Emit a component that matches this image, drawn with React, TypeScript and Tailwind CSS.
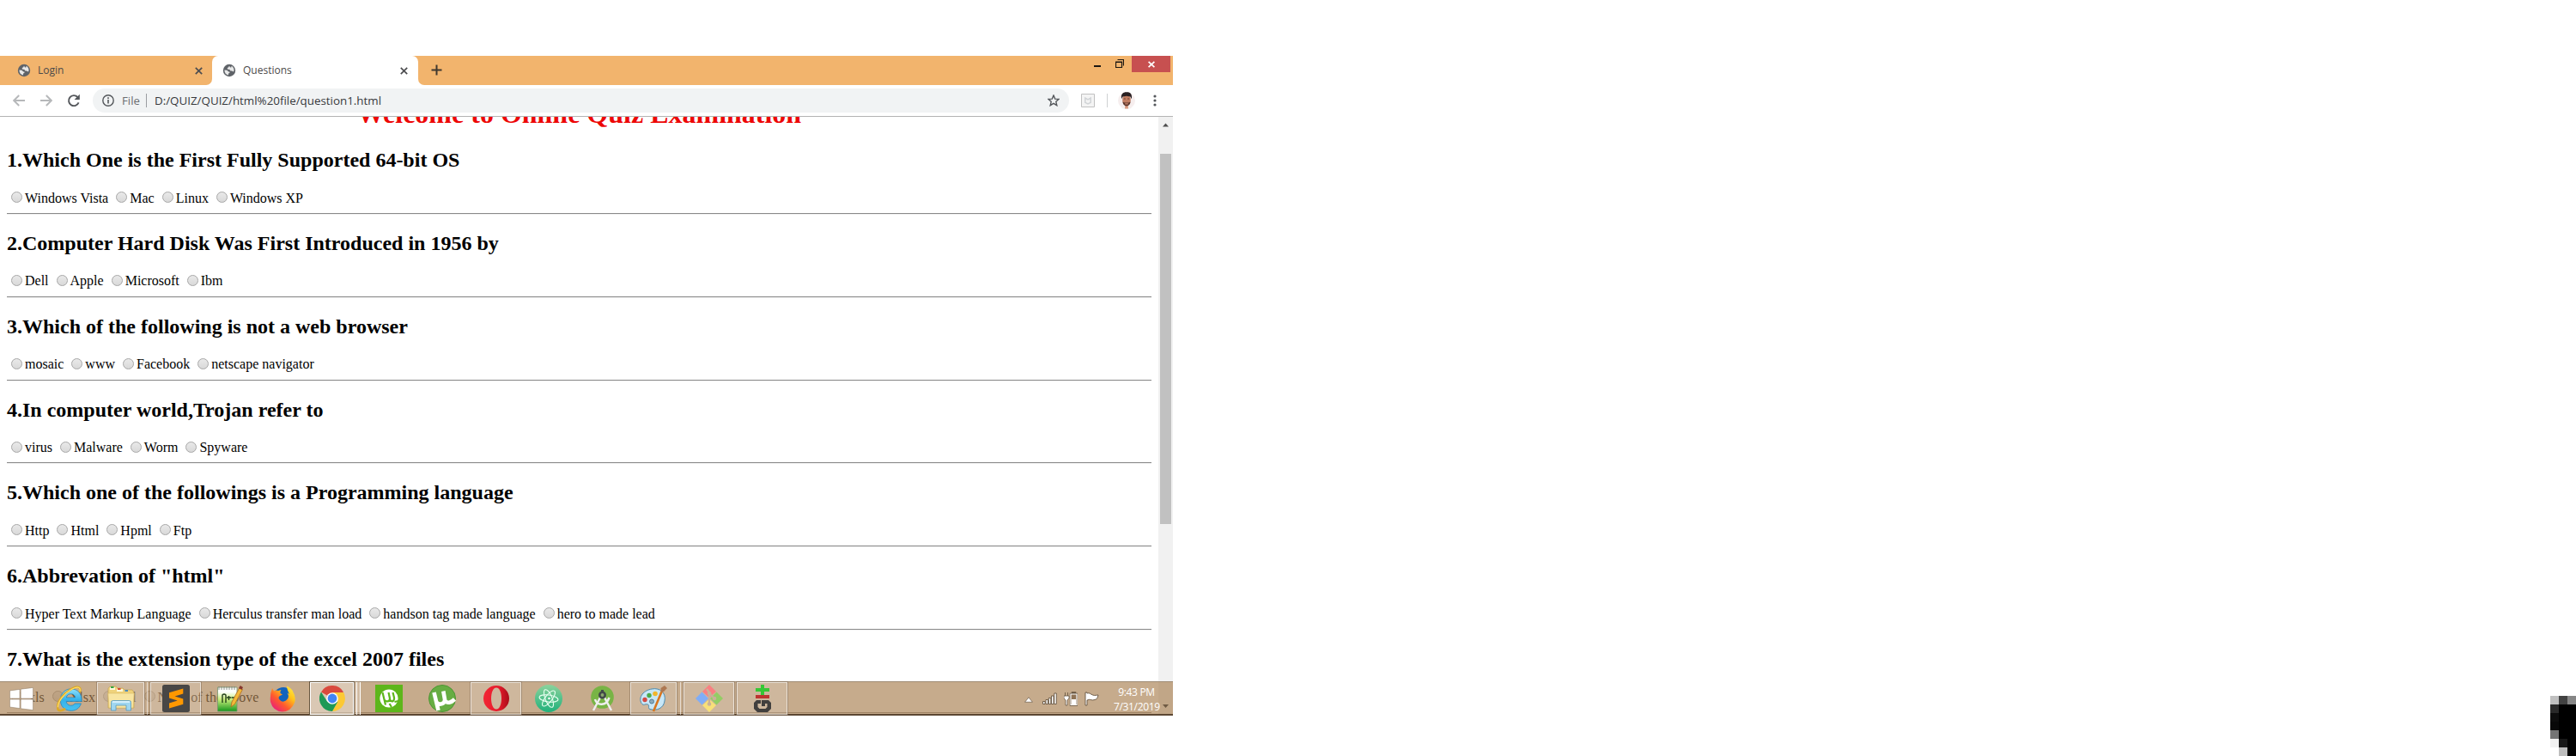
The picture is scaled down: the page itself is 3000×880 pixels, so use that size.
import React from "react";

const questions: { title: string; options: string[] }[] = [
  { title: "1.Which One is the First Fully Supported 64-bit OS", options: ["Windows Vista", "Mac", "Linux", "Windows XP"] },
  { title: "2.Computer Hard Disk Was First Introduced in 1956 by", options: ["Dell", "Apple", "Microsoft", "Ibm"] },
  { title: "3.Which of the following is not a web browser", options: ["mosaic", "www", "Facebook", "netscape navigator"] },
  { title: "4.In computer world,Trojan refer to", options: ["virus", "Malware", "Worm", "Spyware"] },
  { title: "5.Which one of the followings is a Programming language", options: ["Http", "Html", "Hpml", "Ftp"] },
  { title: '6.Abbrevation of "html"', options: ["Hyper Text Markup Language", "Herculus transfer man load", "handson tag made language", "hero to made lead"] },
  { title: "7.What is the extension type of the excel 2007 files", options: [".xls", ".Xlsx", ".xsl", "None of the above"] },
];

function Globe() {
  return (
    <svg className="size-[16px] shrink-0" viewBox="0 0 16 16">
      <circle cx="8" cy="8" r="7.2" fill="#5f6368" />
      <path d="M2.4 7.6 5.4 7.8 7.2 9.6H8.4V11L7 11.6V13.6C4.4 13.2 2.4 11 2.4 7.6ZM8 2.4 7.2 4.2 5.8 5V6.4L8.4 7 9.4 8.6 11.2 8.4 12.6 9.4 13.5 8.6C13.8 5.8 12.4 3.6 10.4 2.8L10.6 4.2 9 4.4Z" fill="#fff" opacity=".85" />
    </svg>
  );
}

function Close() {
  return (
    <svg className="size-[9px] shrink-0" viewBox="0 0 9 9">
      <path d="M.8.8 8.2 8.2M8.2.8.8 8.2" stroke="#4c4d50" strokeWidth="1.7" />
    </svg>
  );
}

function TabStrip() {
  return (
    <div className="flex h-[34px] bg-[#f2b46d] text-[12px] text-[#4b4a4a]">
      <div className="flex h-full w-[247px] items-center pl-[20px] pr-[11px]">
        <Globe />
        <span className="ml-[8px] flex-1">Login</span>
        <Close />
      </div>
      <div className="relative flex h-full w-[240px] items-center rounded-t-[7px] bg-white pl-[12px] pr-[12px]">
        <svg className="absolute bottom-0 -left-[7px] size-[7px]" viewBox="0 0 7 7"><path d="M7 0V7H0A7 7 0 0 0 7 0Z" fill="#fff" /></svg>
        <svg className="absolute bottom-0 -right-[7px] size-[7px]" viewBox="0 0 7 7"><path d="M0 0V7H7A7 7 0 0 1 0 0Z" fill="#fff" /></svg>
        <Globe />
        <span className="ml-[8px] flex-1">Questions</span>
        <Close />
      </div>
      <svg className="mt-[10px] ml-[15px] size-[13px]" viewBox="0 0 13 13"><path d="M6.5 .5V12.5M.5 6.5H12.5" stroke="#40382f" strokeWidth="2" /></svg>
      <div className="ml-auto flex items-start">
        <svg className="mt-[11px] h-[2px] w-[8px]" viewBox="0 0 8 2"><path d="M0 0H8V2H0Z" fill="#1c1712" /></svg>
        <svg className="mt-[4px] ml-[17px] size-[10px]" viewBox="0 0 10 10"><path d="M2.5 .5H9.5V7.5M.5 3H7.5V9.5H.5ZM.5 3.5H7.5" fill="none" stroke="#1c1712" strokeWidth="1.2" /></svg>
        <div className="ml-[9px] mr-[3px] flex h-[19px] w-[45px] items-center justify-center bg-[#c75050]">
          <svg className="size-[8px]" viewBox="0 0 8 8"><path d="M.6.8 7.4 7.2M7.4.8.6 7.2" stroke="#fff" strokeWidth="1.7" /></svg>
        </div>
      </div>
    </div>
  );
}

function Toolbar() {
  return (
    <div className="flex h-[37px] items-center border-b border-[#b4b4b4] bg-white">
      <svg className="ml-[15px] size-[14px]" viewBox="0 0 14 14"><path d="M14 7H1.5M7.2 1 1.2 7 7.2 13" fill="none" stroke="#b6b8ba" strokeWidth="1.9" /></svg>
      <svg className="ml-[18px] size-[14px]" viewBox="0 0 14 14"><path d="M0 7H12.5M6.8 1 12.8 7 6.8 13" fill="none" stroke="#b6b8ba" strokeWidth="1.9" /></svg>
      <svg className="ml-[17px] size-[16px]" viewBox="0 0 16 16"><path d="M13.6 10.4A6 6 0 1 1 12.4 4" fill="none" stroke="#54575b" strokeWidth="1.9" /><path d="M14.8 .8V7H8.6Z" fill="#54575b" /></svg>
      <div className="ml-[14px] flex h-[28px] w-[1137px] items-center rounded-full bg-[#f1f3f4] pl-[11px] text-[14px]">
        <svg className="size-[14px]" viewBox="0 0 14 14"><circle cx="7" cy="7" r="6.2" fill="none" stroke="#54575b" strokeWidth="1.4" /><path d="M7 6V10.6M7 3.3V5" stroke="#54575b" strokeWidth="1.6" /></svg>
        <span className="ml-[9px] w-[22px] pt-[1px] whitespace-nowrap text-[13.2px] text-[#6b6e72]">File</span>
        <div className="ml-[6px] h-[16px] w-px bg-[#9a9da1]" />
        <span className="ml-[9px] flex-1 pt-[1px] text-[13.36px] text-[#37393c]">D:/QUIZ/QUIZ/html%20file/question1.html</span>
        <svg className="mr-[11px] size-[14px]" viewBox="0 0 14 14"><path d="M7 1 8.7 5.1 13.1 5.4 9.8 8.3 10.8 12.7 7 10.3 3.2 12.7 4.2 8.3 .9 5.4 5.3 5.1Z" fill="none" stroke="#54575b" strokeWidth="1.4" /></svg>
      </div>
      <svg className="ml-[14px] size-[16px]" viewBox="0 0 16 16"><path d="M.5 .5H15.5V15.5H.5Z" fill="#f4f4f4" stroke="#c0c0c0" /><path d="M4.8 5V10.3L8 12 11.2 10.3V5L8 6.8Z" fill="none" stroke="#d0d3d6" strokeWidth="1.5" /></svg>
      <div className="ml-[14px] h-[16px] w-px bg-[#cfd1d3]" />
      <svg className="ml-[12px] size-[20px]" viewBox="0 0 20 20">
        <circle cx="10" cy="10" r="10" fill="#f6eeee" />
        <path d="M6.2 14H13.8V17L16 19 10 20 4 19 6.2 17Z" fill="#f3f0ef" />
        <path d="M8.3 15H11.7L12 19.5H8Z" fill="#d99a80" />
        <ellipse cx="10" cy="9.5" rx="4.8" ry="6.7" fill="#c07c61" />
        <path d="M4.2 8C2.8 3 6-.2 10 .2 14.6-.3 17 3.2 15.7 8.2L14.4 5.5 10 4.8 5.6 5.5Z" fill="#292022" />
        <path d="M5.4 11.5 7.7 12.6H12.3L14.6 11.5C14.2 14.5 12.5 16.4 10 16.4S5.8 14.5 5.4 11.5Z" fill="#5b362c" />
        <path d="M8.2 13.9H11.8" stroke="#d18b72" strokeWidth="1.2" /><path d="M6.8 8H8.8M11.2 8H13.2" stroke="#6b3f32" />
      </svg>
      <svg className="ml-[21px] h-[14px] w-[4px]" viewBox="0 0 4 14"><circle cx="2" cy="2" r="1.6" fill="#54575b" /><circle cx="2" cy="7" r="1.6" fill="#54575b" /><circle cx="2" cy="12" r="1.6" fill="#54575b" /></svg>
    </div>
  );
}

function Page() {
  return (
    <div className="flex h-[697px] overflow-hidden bg-white font-['Liberation_Serif',serif] text-black">
      <div className="flex w-[1349px] flex-col px-[8px]">
        <h1 className="-mt-[22px] h-[36px] shrink-0 text-center text-[32px] leading-[37px] font-bold text-[#ed0707]">Welcome to Online Quiz Examination</h1>
        {questions.map((q) => (
          <section key={q.title} className="flex h-[96.83px] shrink-0 flex-col first-of-type:h-[100px] first-of-type:pt-[3.17px]">
            <h2 className="pt-[20px] text-[24px] leading-[27px] font-bold">{q.title}</h2>
            <div className="mt-[21.4px] flex h-[18px] items-center text-[16px] leading-[18px]">
              {q.options.map((o) => (
                <label key={o} className="mr-[4px] flex items-center whitespace-pre">
                  <span className="mr-[3px] mb-[2px] ml-[5px] size-[13px] rounded-full border border-[#a6a6a6] bg-linear-to-b from-[#e9e9e9] to-[#d9d9d9]" />
                  {o}
                </label>
              ))}
            </div>
            <div className="mt-auto h-[2px] shrink-0 border-t border-b border-t-[#8a8a8a] border-b-[#f2f2f2]" />
          </section>
        ))}
      </div>
      <div className="flex w-[17px] flex-col items-center bg-[#f1f1f1] pt-[7px]">
        <svg className="h-[5px] w-[7px]" viewBox="0 0 7 5"><path d="M3.5 .5 7 4.5H0Z" fill="#505050" /></svg>
        <div className="mt-[31px] h-[431px] w-[13px] bg-[#c1c1c1]" />
      </div>
    </div>
  );
}

const big = "size-[32px] shrink-0";

function WindowsLogo() {
  return <svg className="h-[27px] w-[28px]" viewBox="0 0 28 27"><path d="M.5 4 12 2.4V13H.5ZM13.2 2.2 27.5 .4V13H13.2ZM.5 14H12V24.6L.5 23ZM13.2 14H27.5V26.6L13.2 24.8Z" fill="#fff" stroke="#8d7a65" strokeWidth=".5" /></svg>;
}
function IE() {
  return (
    <svg className="h-[31px] w-[30px]" viewBox="1 0 31 32" preserveAspectRatio="none">
      <defs><linearGradient id="ie" x1="0" y1="0" x2="0" y2="1"><stop stopColor="#8fe0fb" /><stop offset=".5" stopColor="#35b2ea" /><stop offset="1" stopColor="#49c1f0" /></linearGradient></defs>
      <path d="M31 19H12.5C13 24.4 20.5 25.5 22.8 21.6H30.4C28 28.5 22.5 30.5 17.5 30.2 9.5 29.8 5.5 24 5.5 17.3 5.5 9 11.5 4 18.3 4 26.5 4 31.7 10 31 19ZM12.7 14.4H23.5C23 8.7 13.5 8.5 12.7 14.4Z" fill="url(#ie)" stroke="#2586bd" strokeWidth=".8" />
      <path d="M28.8 8C31 1.5 26-.2 18.5 4.2 9 9.6 2 19.2 2 26 2 31.5 7.5 30.6 11.5 27.8" fill="none" stroke="#dca82a" strokeWidth="2.8" />
      <path d="M28.8 7C30.5 2 26 .3 18.8 4.7 9.4 10 2.5 19.5 2.5 26" fill="none" stroke="#ffe169" strokeWidth="1.2" />
    </svg>
  );
}
function Folder() {
  return (
    <svg className="h-[30px] w-[32px]" viewBox="0 0 32 30">
      <path d="M1 3.5 3 1H10L12 3H18L20 5H29L31 8V26H1Z" fill="#efd27b" stroke="#c4a353" strokeWidth=".7" />
      <path d="M3 2H9V5H3ZM11 4H18V7H11Z" fill="#fff9dc" /><path d="M4 1H7.5V3H4Z" fill="#35a742" /><path d="M12 3H15.5V5H12Z" fill="#d84c32" /><path d="M20.5 5H24V7H20.5Z" fill="#4d8bb9" />
      <path d="M.8 9H31.2L30 26H2Z" fill="#f8e5a1" stroke="#d7b966" strokeWidth=".6" />
      <path d="M4.5 29V19.5Q4.5 17.5 6.5 17.5H25.5Q27.5 17.5 27.5 19.5V29H22V23H10V29Z" fill="#9fd6f0" stroke="#5799bd" strokeWidth=".8" />
      <path d="M6 19H26" stroke="#e6f8ff" strokeWidth="1.5" />
    </svg>
  );
}
function Sublime() {
  return <svg className={big} viewBox="0 0 32 32"><rect width="32" height="32" rx="2.5" fill="#484746" /><path d="M8 9.3 24.3 4.5V10.5L14.6 13.5 24.3 16.5V22.7L8 27.5V21.5L17.7 18.4 8 15.5Z" fill="#ff9800" /></svg>;
}
function NotepadPP() {
  return (
    <svg className="h-[33px] w-[31px]" viewBox="0 0 31 33">
      <defs><linearGradient id="npp" x1="0" y1="0" x2="0" y2="1"><stop offset=".2" stopColor="#fcfffa" /><stop offset=".5" stopColor="#c9ee7c" /><stop offset="1" stopColor="#16961c" /></linearGradient></defs>
      <path d="M1.5 3H24V31H1.5Z" fill="url(#npp)" stroke="#75966d" strokeWidth=".8" />
      <path d="M3 2V6M6 2V6M9 2V6M12 2V6M15 2V6M18 2V6M21 2V6" stroke="#777" strokeWidth=".8" />
      <path d="M7 21V12Q9 10 11 12V21M12 15H17M14.5 13V18M17.5 15H21" fill="none" stroke="#24411a" strokeWidth="1.4" />
      <path d="M17 26 18 20 27 3.5 30.5 5.5 21.5 22.5Z" fill="#f3b838" stroke="#aa6922" strokeWidth=".8" /><path d="M26 4 27.8 1 31 3 29.5 6Z" fill="#87382e" />
    </svg>
  );
}
function Firefox() {
  return (
    <svg className="h-[31px] w-[30px]" viewBox="0 0 30 31">
      <defs><linearGradient id="ff" x1="1" y1="0" x2=".15" y2="1"><stop stopColor="#fff44f" /><stop offset=".35" stopColor="#ffc21a" /><stop offset=".65" stopColor="#ff5b2d" /><stop offset="1" stopColor="#e61587" /></linearGradient></defs>
      <circle cx="16" cy="14" r="12" fill="#1263bd" />
      <path d="M3 3 5 6.5Q7.5 5 10 6L13.5 5Q12 7 12.5 9L15 10.4 12 12Q9 14 12 17 15 20 19 17.5 24 14 20.5 8.5L23 10Q20 4 20 .5 26 3 27.5 8 31 13 29 20 25 30 15 30.5 4 30 1 19 0 11 3 3Z" fill="url(#ff)" />
    </svg>
  );
}
function Chrome() {
  return (
    <svg className="size-[30px]" viewBox="0 0 30 30">
      <path d="M15 15 2 7.5A15 15 0 0 1 28 7.5Z" fill="#d94a3d" /><path d="M15 8H28.2A15 15 0 0 1 15 30L21 18.5Z" fill="#fcc934" /><path d="M2 7.5A15 15 0 0 0 15 30L21.3 18.8 9 18.5Z" fill="#1e9955" />
      <circle cx="15" cy="15" r="6.8" fill="#fff" /><circle cx="15" cy="15" r="5.4" fill="#4285f4" />
    </svg>
  );
}
function UTorrentSquare() {
  return <svg className={big} viewBox="0 0 32 32"><path d="M0 0H32V32H0Z" fill="#5db61b" /><circle cx="16" cy="16" r="10.6" fill="#fff" /><path d="M8.5 9 12 23.5M10.6 17.6C12.5 20.5 17.2 19.8 17 16L15.5 9M17.5 18C19.5 20.5 22.5 19 22 15L20.5 9M16.5 22 19 26M22.5 20 27 19" fill="none" stroke="#5db61b" strokeWidth="2.2" /></svg>;
}
function UTorrent() {
  return <svg className={big} viewBox="0 0 32 32"><circle cx="16" cy="16" r="15.5" fill="#67ad43" stroke="#4c9633" /><path d="M6.5 9 11.5 30M9.5 20.5C12 24 19.5 23 19 17L17.3 7.5M19 18C21.5 22.5 26.5 21 30.5 17" fill="none" stroke="#fff" strokeWidth="4.6" /></svg>;
}
function Opera() {
  return (
    <svg className="size-[30px]" viewBox="0 0 30 30"><defs><linearGradient id="op"><stop stopColor="#f32534" /><stop offset=".6" stopColor="#e51b2b" /><stop offset="1" stopColor="#a80d1a" /></linearGradient></defs>
      <path fillRule="evenodd" d="M15 0A15 15 0 1 1 15 30 15 15 0 0 1 15 0ZM15 2.5C7 2.5 7 27.5 15 27.5S23 2.5 15 2.5Z" fill="url(#op)" /></svg>
  );
}
function Atom() {
  return (
    <svg className={big} viewBox="0 0 32 32"><defs><linearGradient id="at" x1="0" y1="0" x2="0" y2="1"><stop stopColor="#8bd29c" /><stop offset="1" stopColor="#20b17b" /></linearGradient></defs>
      <circle cx="16" cy="16" r="16" fill="url(#at)" />
      <g fill="none" stroke="#e9fff1" strokeWidth="1.1"><ellipse cx="16" cy="16" rx="11" ry="4" transform="rotate(8 16 16)" /><ellipse cx="16" cy="16" rx="11" ry="4" transform="rotate(68 16 16)" /><ellipse cx="16" cy="16" rx="11" ry="4" transform="rotate(128 16 16)" /></g><circle cx="16.5" cy="16" r="1.3" fill="#fff" /></svg>
  );
}
function AndroidStudio() {
  return <svg className="h-[32px] w-[27px]" viewBox="0 0 27 32"><circle cx="13.5" cy="14.5" r="13.3" fill="#78b445" /><path d="M12 13 3 30M15 13 24 30M5 17C7 24.5 18 25.5 21.5 15" fill="none" stroke="#eee" strokeWidth="2.5" /><circle cx="13.5" cy="12" r="3.2" fill="#8aa66e" stroke="#424948" strokeWidth="2.6" /><path d="M12 6H15V9H12Z" fill="#424948" /></svg>;
}
function Paint() {
  return (
    <svg className="h-[32px] w-[33px]" viewBox="0 0 33 32">
      <path d="M14 5C24 3 31 10 29 19 28 27 20 31 12 28.5 9 27.5 12 24 9.5 23 6 21.5 5 25.5 2 21.5-2 14 5 6.5 14 5Z" fill="#c8e7f7" stroke="#4b8aae" />
      <circle cx="6" cy="17.5" r="2.7" fill="#d34a42" /><circle cx="11" cy="12.5" r="2.7" fill="#4bab4c" /><circle cx="18" cy="10.5" r="2.8" fill="#f1b62d" /><circle cx="14" cy="19.5" r="2.5" fill="#8aaabc" stroke="#547d96" />
      <path d="M16 31 26 7" stroke="#d9761f" strokeWidth="2.6" /><path d="M25 9 24.5 4 29 1 32 4 28 8Z" fill="#ad7852" />
    </svg>
  );
}
function GitLogo() {
  return <svg className={big} viewBox="0 0 32 32"><path d="M16 0 24 8 16 15 8 8Z" fill="#f98082" /><path d="M24.5 8.5 32 16 24.5 23.5 17 16Z" fill="#93cd65" /><path d="M16 32 8 24 16 17 24 24Z" fill="#f8e078" /><path d="M7.5 8.5 15 16 7.5 23.5 0 16Z" fill="#80adf7" /><path d="M13 5 16 9V23M16 10 22 16" fill="none" stroke="#c9b199" strokeWidth="2.2" /><circle cx="16" cy="10" r="2.3" fill="#c9b199" /><circle cx="22" cy="16" r="2.3" fill="#c9b199" /><circle cx="16" cy="22.5" r="2.3" fill="#c9b199" /></svg>;
}
function GitGui() {
  return <svg className="h-[32px] w-[20px]" viewBox="0 0 20 32"><path d="M8 0H12V4H18V8H12V12H8V8H2V4H8Z" fill="#35c735" /><path d="M2 12H18V16H2Z" fill="#bd3430" /><path d="M3 18H8V22H4.500V26L6.500 28H13.500L15.500 26V22H13V25H9V18H17L20 21V28L16 32H4L0 28V21Z" fill="#413f3e" /></svg>;
}

const taskButtons: { w: string; icon: React.ReactNode }[] = [
  { w: "ml-[11px] w-[28px]", icon: <WindowsLogo /> },
  { w: "ml-[27px] w-[30px]", icon: <IE /> },
  { w: "ml-[17px] w-[55px] border border-white/60 bg-white/15 outline outline-[#806b55]/50", icon: <Folder /> },
  { w: "w-[4px] border-r border-white/60", icon: null },
  { w: "ml-[3px] w-[59px] border border-white/60 bg-white/15 outline outline-[#806b55]/50", icon: <Sublime /> },
  { w: "ml-[17px] w-[32px]", icon: <NotepadPP /> },
  { w: "ml-[31px] w-[30px]", icon: <Firefox /> },
  { w: "ml-[17px] w-[51px] border border-white bg-white/35 outline outline-[#67563f]", icon: <Chrome /> },
  { w: "w-[4px] border-r border-white bg-white/20", icon: null },
  { w: "w-[4px] border-r border-white bg-white/20", icon: null },
  { w: "ml-[17px] w-[32px]", icon: <UTorrentSquare /> },
  { w: "ml-[30px] w-[32px]", icon: <UTorrent /> },
  { w: "ml-[17px] w-[59px] border border-white/60 bg-white/15 outline outline-[#806b55]/50", icon: <Opera /> },
  { w: "ml-[16px] w-[32px]", icon: <Atom /> },
  { w: "ml-[33px] w-[27px]", icon: <AndroidStudio /> },
  { w: "ml-[19px] w-[54px] border border-white/60 bg-white/15 outline outline-[#806b55]/50", icon: <Paint /> },
  { w: "w-[5px] border-r border-white/60", icon: null },
  { w: "ml-[3px] w-[59px] border border-white/60 bg-white/15 outline outline-[#806b55]/50", icon: <GitLogo /> },
  { w: "ml-[3px] w-[59px] border border-white/60 bg-white/15 outline outline-[#806b55]/50", icon: <GitGui /> },
];

function Taskbar() {
  return (
    <div className="absolute bottom-0 left-0 flex h-[40px] w-full items-start border-t border-b-2 border-t-[#a08c74] border-b-[#5c4733] bg-[#a97f51]/66">
      {taskButtons.map((b, i) => (
        <div key={i} className={`flex h-[38px] shrink-0 items-center justify-center ${b.w}`}>{b.icon}</div>
      ))}
      <div className="ml-auto flex h-[38px] items-center">
        <svg className="mt-[2px] h-[7px] w-[10px]" viewBox="0 0 9 6"><path d="M4.5 .5 8.5 5.5H.5Z" fill="#fff" stroke="#756453" strokeWidth=".7" /></svg>
        <svg className="ml-[11px] h-[14px] w-[17px]" viewBox="0 0 17 14"><path d="M.5 10.5H3V13.5H.5ZM4 8.5H6.5V13.5H4ZM7.3 6.5H9.8V13.5H7.3ZM10.5 4H13V13.5H10.5ZM13.8 1H16.3V13.5H13.8Z" fill="#fff" stroke="#65543f" strokeWidth=".9" /></svg>
        <svg className="ml-[8px] h-[17px] w-[16px]" viewBox="0 0 16 17"><path d="M1.5 1V5M4.5 1V5M0 5H6V8L4 10V16H2V10L0 8Z" fill="#fff" stroke="#65543f" strokeWidth=".8" /><path d="M8 3H10V1.5H13V3H15V15.5H8Z" fill="#c9aa88" stroke="#65543f" strokeWidth="2.4" /><path d="M8 3H15V15.5H8Z" fill="#8f7355" stroke="#fff" strokeWidth="1.2" /><path d="M9 9H14V15H9Z" fill="#fff" /></svg>
        <svg className="ml-[8px] h-[17px] w-[17px]" viewBox="0 0 17 17"><path d="M1 1H3V2C6 1 7 3 9.5 4 12 5 14 4 16 4 15 7 15 9 12 9.5 8 11 7 8 3 10V16H1Z" fill="#fff" stroke="#65543f" strokeWidth=".9" /></svg>
        <div className="mt-[1px] ml-[17px] w-[53px] text-center font-['Open_Sans',sans-serif] text-[12px] leading-[17px] tracking-[-0.35px] whitespace-nowrap text-white">
          <div>9:43 PM</div>
          <div>7/31/2019</div>
        </div>
        <svg className="mt-[18px] mr-[5px] ml-[4px] h-[4px] w-[7px]" viewBox="0 0 7 4"><path d="M0 0H7L3.5 4Z" fill="#6f5a43" /></svg>
      </div>
    </div>
  );
}

function Corner() {
  return (
    <svg className="h-[70px] w-[30px]" viewBox="0 0 30 70" shapeRendering="crispEdges">
      <path d="M10 0H30V70H10Z" fill="#000" />
      <path d="M0 0H10V10H0Z" fill="#c0c0c0" /><path d="M10 0H20V10H10Z" fill="#424242" /><path d="M20 0H30V10H20Z" fill="#868686" />
      <path d="M0 10H10V20H0Z" fill="#2a2a2a" /><path d="M0 20H10V30H0Z" fill="#0d0d0d" /><path d="M0 30H10V40H0Z" fill="#080808" />
      <path d="M0 40H10V50H0Z" fill="#747474" /><path d="M0 50H10V60H0Z" fill="#f1f1f1" /><path d="M10 50H20V60H10Z" fill="#181818" /><path d="M0 60H10V70H0Z" fill="#fff" /><path d="M10 60H20V70H10Z" fill="#bdbdbd" />
    </svg>
  );
}

export default function App() {
  return (
    <div className="flex h-[880px] w-[3000px] items-end justify-between overflow-hidden bg-white font-['Open_Sans',sans-serif]">
      <div className="relative mb-[47px] h-[768px] w-[1366px] overflow-hidden">
        <TabStrip />
        <Toolbar />
        <Page />
        <Taskbar />
      </div>
      <Corner />
    </div>
  );
}
